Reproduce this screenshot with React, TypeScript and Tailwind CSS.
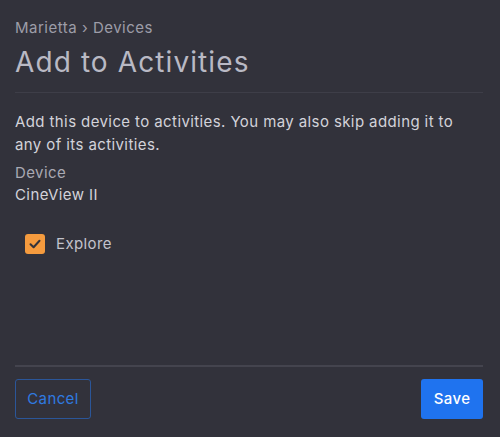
import React, { useState } from 'react'

const App = () => {
  const [checked, setChecked] = useState(true)

  return (
    <div
      className="w-[500px] h-[437px] bg-[#32323b] flex flex-col pl-[15px] pr-[17px]"
      style={{ fontFamily: 'Inter, "Noto Sans", sans-serif' }}
    >
      <div className="pt-[17px] text-[15px] leading-[22px] tracking-[0.5px] text-[#9d9da8]">
        Marietta › Devices
      </div>
      <h1 className="mt-[6px] text-[28px] leading-[34px] tracking-[1.1px] text-[#b9b9c4]">
        Add to Activities
      </h1>
      <div className="mt-[13px] border-t border-[#3e3e48]" />

      <p className="mt-[17px] text-[15px] leading-[23px] tracking-[0.4px] text-[#d3d3da]">
        Add this device to activities. You may also skip adding it to any of its activities.
      </p>
      <div className="mt-[6px] text-[15px] leading-[22px] tracking-[0.4px]">
        <div className="text-[#a9a9b3]">Device</div>
        <div className="text-[#d3d3da]">CineView II</div>
      </div>

      <label className="mt-[27px] ml-[10px] flex items-center gap-[11px] cursor-pointer">
        <button
          onClick={() => setChecked(!checked)}
          className={`w-[20px] h-[20px] rounded-[3px] flex items-center justify-center ${
            checked ? 'bg-[#f59b3e]' : 'border border-[#9d9da8]'
          }`}
        >
          {checked && (
            <svg width="14" height="14" viewBox="0 0 14 14" fill="none">
              <path d="M2.5 7.2 L5.6 10.2 L11.5 3.8" stroke="#32323b" strokeWidth="2" strokeLinecap="round" strokeLinejoin="round" />
            </svg>
          )}
        </button>
        <span className="text-[15px] tracking-[0.4px] text-[#c3c3cc]">Explore</span>
      </label>

      <div className="mt-auto border-t-2 border-[#44444e]" />
      <div className="flex justify-between items-center pt-[12px] pb-[18px]">
        <button className="h-[40px] w-[76px] rounded-[3px] border border-[#2b5699] text-[15px] tracking-[0.4px] text-[#2f7ae0]">
          Cancel
        </button>
        <button className="h-[40px] w-[62px] rounded-[3px] bg-[#1f73ef] text-[15px] tracking-[0.4px] text-white font-medium">
          Save
        </button>
      </div>
    </div>
  )
}

export default App
